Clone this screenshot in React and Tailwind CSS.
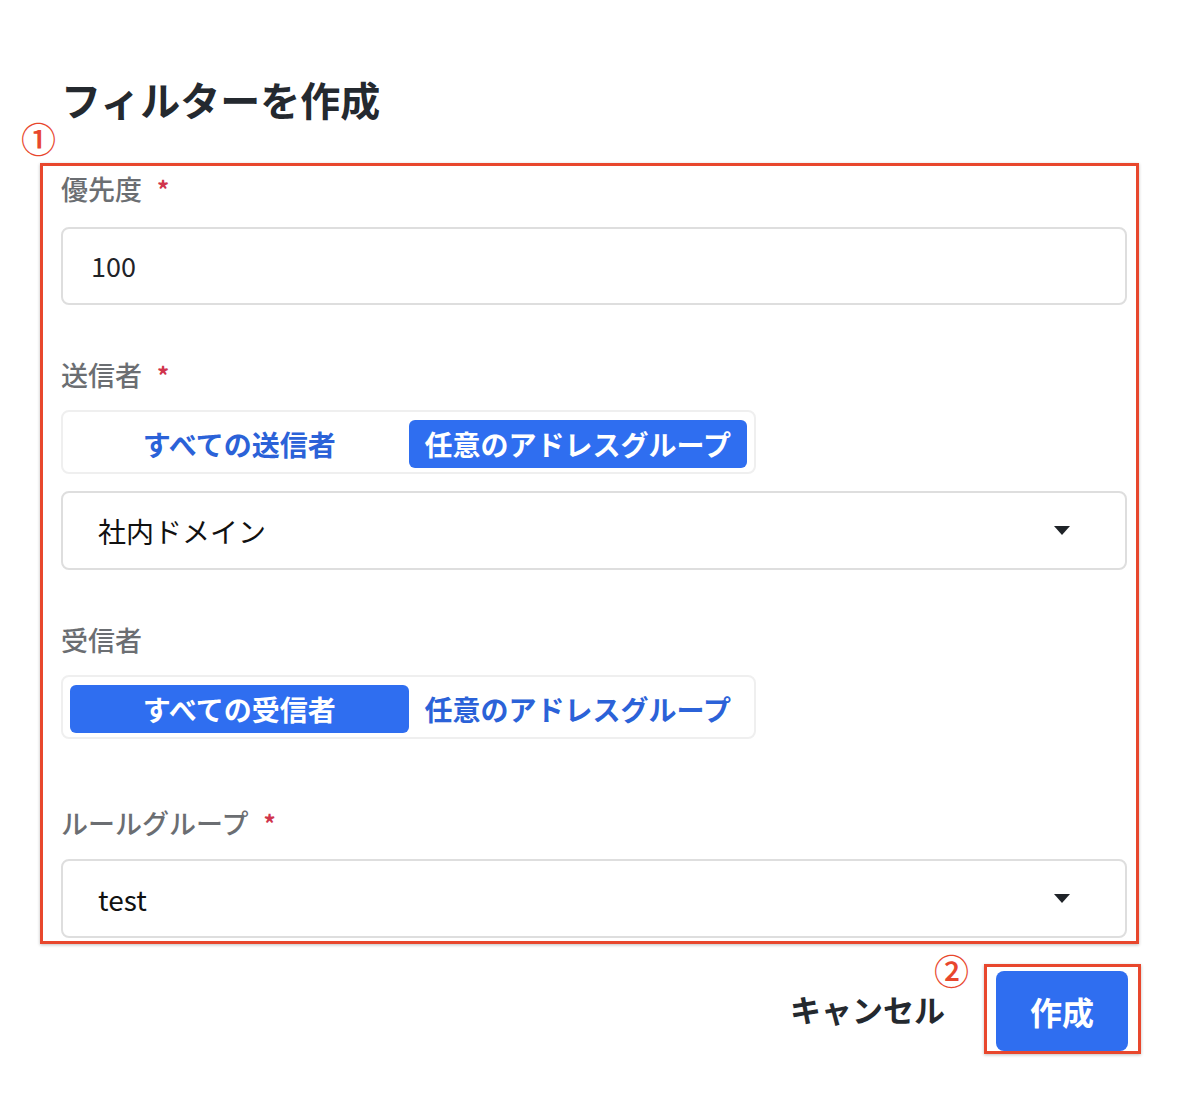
import React from "react";

const FONT = {
  fontFamily: '"Noto Sans CJK JP", "Noto Sans", sans-serif',
};

function Label({ text, required }) {
  return (
    <div className="flex h-[38px] items-center text-[27px] font-medium leading-[38px] text-[#6b6e72]">
      <span>{text}</span>
      {required && (
        <span className="ml-[15px] text-[24px] font-bold text-[#d0344c]">*</span>
      )}
    </div>
  );
}

function Caret() {
  return (
    <svg width="16" height="9" viewBox="0 0 16 9" className="shrink-0">
      <path d="M0 0 L16 0 L8 9 Z" fill="#1f2328" />
    </svg>
  );
}

function SelectBox({ value }) {
  return (
    <div className="flex h-[79px] items-center justify-between rounded-[8px] border-2 border-[#dedede] bg-white pl-[35px] pr-[55px]">
      <span className="text-[28px] text-[#111]">{value}</span>
      <Caret />
    </div>
  );
}

function Toggle({ options, active }) {
  return (
    <div className="flex h-[64px] w-[695px] rounded-[8px] border-2 border-[#efefef] bg-white pb-[4px] pl-[7px] pr-[7px] pt-[8px]">
      {options.map((opt, i) => (
        <div
          key={opt}
          className={`flex flex-1 items-center justify-center rounded-[6px] text-[28px] font-bold ${
            i === active ? "bg-[#2f6ef0] text-white" : "text-[#2b62d8]"
          }`}
        >
          {opt}
        </div>
      ))}
    </div>
  );
}

export default function App() {
  return (
    <div className="relative min-h-[1108px] w-[1190px] bg-white" style={FONT}>
      <div className="px-[40px] pt-[74px]">
        {/* Title */}
        <h1 className="ml-[21px] h-[50px] text-[40px] font-bold leading-[50px] text-[#24292f]">
          フィルターを作成
        </h1>

        {/* Annotation 1 */}
        <span className="absolute left-[21px] top-[117px] text-[35px] font-medium leading-[42px] text-[#e8472d]">
          ①
        </span>

        {/* Form section */}
        <div className="mt-[39px] w-[1099px] border-[3px] border-[#e8472d] pb-[3px] pl-[18px] pr-[9px] pt-[4px] shadow-[0_1px_3px_rgba(0,0,0,0.25)]">
          <Label text="優先度" required />
          <div className="mt-[19px] flex h-[78px] items-center rounded-[8px] border-2 border-[#dedede] pl-[28px] text-[27px] text-[#1f2328]">
            100
          </div>

          <div className="mt-[51px]">
            <Label text="送信者" required />
          </div>
          <div className="mt-[16px]">
            <Toggle options={["すべての送信者", "任意のアドレスグループ"]} active={1} />
          </div>
          <div className="mt-[17px]">
            <SelectBox value="社内ドメイン" />
          </div>

          <div className="mt-[51px]">
            <Label text="受信者" />
          </div>
          <div className="mt-[16px]">
            <Toggle options={["すべての受信者", "任意のアドレスグループ"]} active={0} />
          </div>

          <div className="mt-[65px]">
            <Label text="ルールグループ" required />
          </div>
          <div className="mt-[17px]">
            <SelectBox value="test" />
          </div>
        </div>

        {/* Footer */}
        <div className="mt-[20px] flex w-[1101px] items-center justify-end">
          <div className="relative mr-[39px] text-[31px] font-bold text-[#24292f]">
            キャンセル
            <span className="absolute right-[-24px] top-[-37px] text-[35px] font-medium leading-[42px] text-[#e8472d]">
              ②
            </span>
          </div>
          <div className="border-[3px] border-[#e8472d] pb-0 pl-[9px] pr-[10px] pt-[4px] shadow-[0_1px_3px_rgba(0,0,0,0.25)]">
            <button className="flex h-[80px] w-[132px] items-center justify-center rounded-[8px] bg-[#2f6ef0] text-[32px] font-bold text-white">
              作成
            </button>
          </div>
        </div>
      </div>
    </div>
  );
}
